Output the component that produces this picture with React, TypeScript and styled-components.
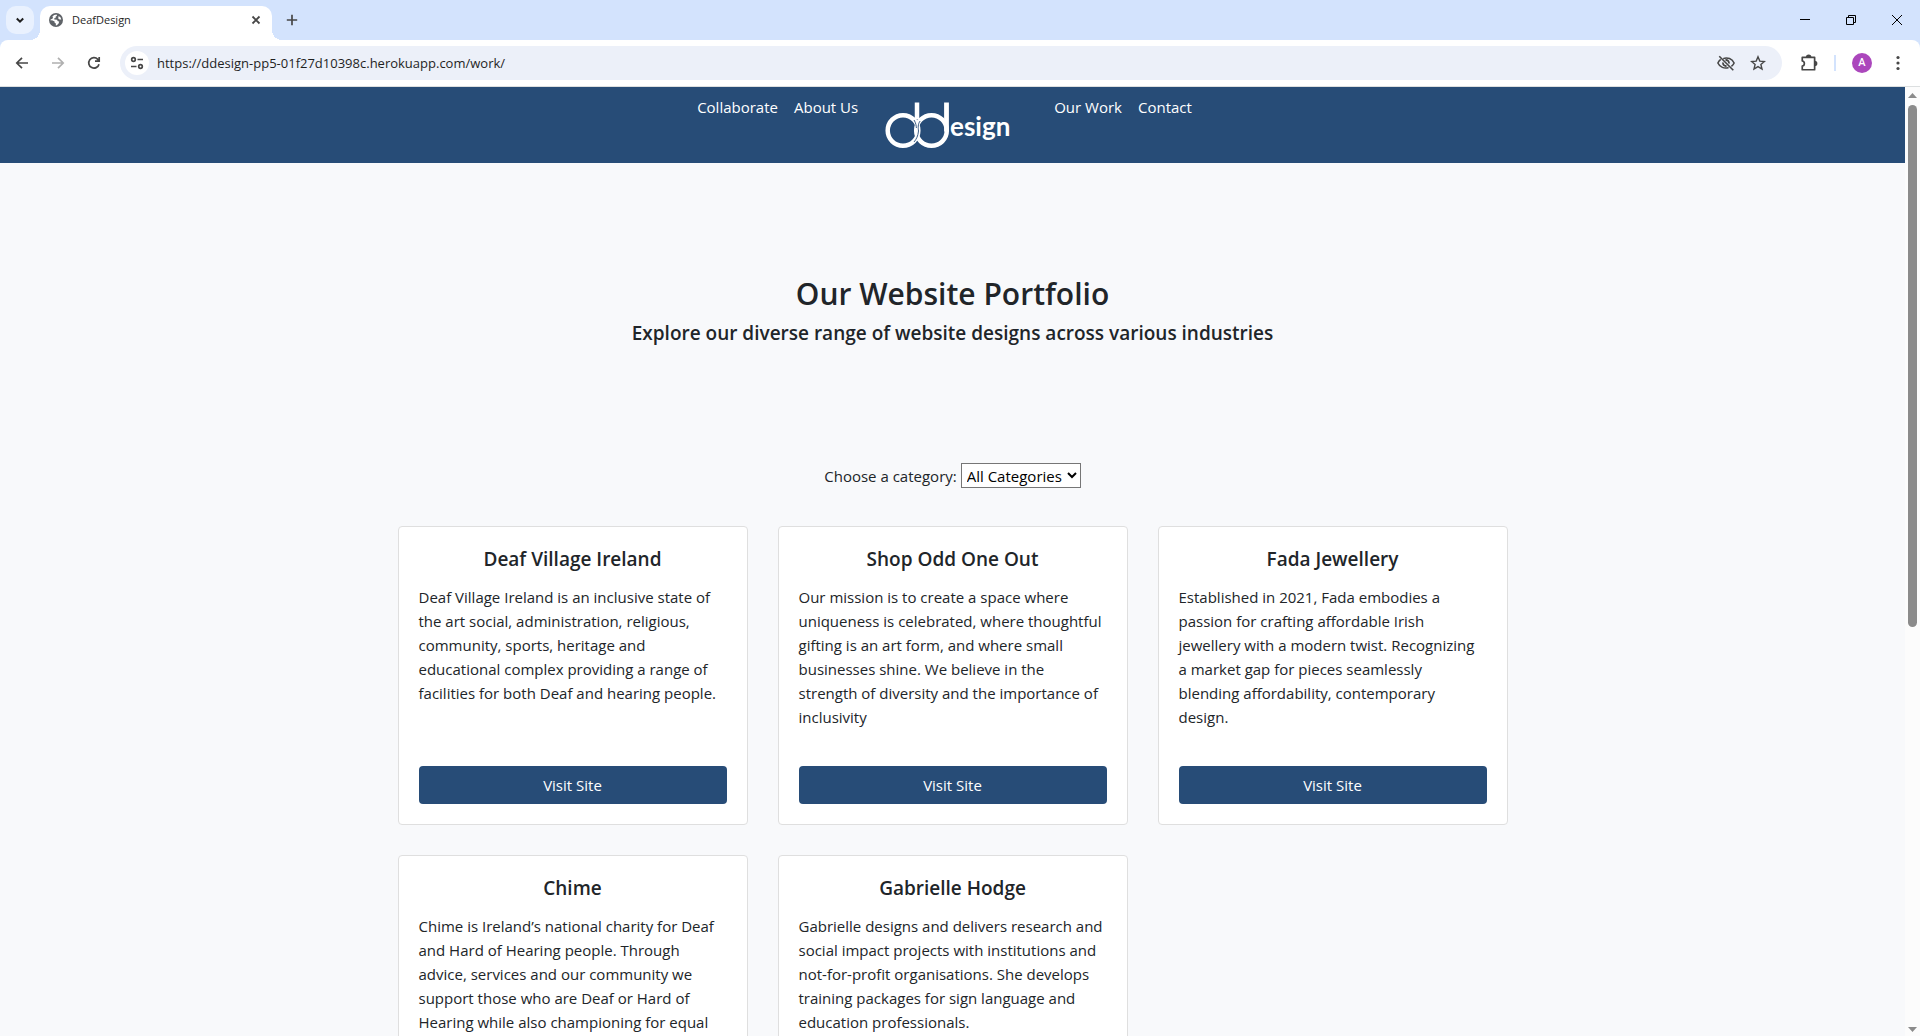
import React from "react";
import styled, { createGlobalStyle } from "styled-components";

const navy = "#274c77";
const ink = "#212529";
const glyph = "#474747";

const GlobalStyle = createGlobalStyle`
  *, *::before, *::after { box-sizing: border-box; }
  body {
    margin: 0;
    color: ${ink};
    background: #f8f9fb;
    font-family: "Segoe UI", "Open Sans", "Noto Sans", sans-serif;
    font-size: 15px;
    line-height: 24px;
  }
  h1, h2, h3, p { margin: 0; }
`;

const Window = styled.div`
  display: flex;
  flex-direction: column;
  height: 100vh;
  overflow: hidden;
`;

/* Browser frame */

const TabStrip = styled.div`
  display: flex;
  align-items: center;
  height: 40px;
  padding-left: 6px;
  background: #d3e3fd;
`;

const ChromeButton = styled.button<{ $size?: number; $faded?: boolean }>`
  display: flex;
  flex: none;
  align-items: center;
  justify-content: center;
  width: ${(p) => p.$size ?? 28}px;
  height: 28px;
  padding: 0;
  border: 0;
  color: ${(p) => (p.$faded ? "#b0b0b0" : glyph)};
  background: transparent;
`;

const TabSearch = styled(ChromeButton)`
  border-radius: 10px;
  color: #1f1f1f;
  background: #e9f1fe;
`;

const Tab = styled.div`
  position: relative;
  display: flex;
  align-items: center;
  align-self: flex-end;
  width: 232px;
  height: 34px;
  margin: 0 6px;
  padding: 0 2px 6px 9px;
  gap: 9px;
  border-radius: 10px 10px 0 0;
  color: #1f1f1f;
  background: #fff;
  font-size: 11px;
  line-height: 16px;

  &::before,
  &::after {
    content: "";
    position: absolute;
    bottom: 0;
    width: 10px;
    height: 10px;
  }
  &::before {
    right: 100%;
    background: radial-gradient(circle at 0 0, transparent 10px, #fff 10px);
  }
  &::after {
    left: 100%;
    background: radial-gradient(circle at 100% 0, transparent 10px, #fff 10px);
  }
`;

const TabTitle = styled.span`
  flex: 1;
`;

const WindowControls = styled.div`
  display: flex;
  margin-left: auto;
`;

const ToolbarBack = styled.div`
  background: #d3e3fd;
`;

const Toolbar = styled.div`
  display: flex;
  align-items: center;
  height: 47px;
  padding: 0 8px 0 4px;
  border-bottom: 1px solid #dcdfe0;
  border-radius: 8px 8px 0 0;
  background: #fff;
`;

const AddressBar = styled.div`
  display: flex;
  flex: 1;
  align-items: center;
  height: 34px;
  margin: 0 10px 0 8px;
  padding: 0 8px 0 5px;
  border-radius: 17px;
  background: #ecf0f9;
`;

const SiteInfo = styled(ChromeButton)`
  height: 24px;
  border-radius: 12px;
  background: #fff;
`;

const AddressInput = styled.input`
  flex: 1;
  height: 24px;
  margin-left: 8px;
  padding: 0;
  border: 0;
  outline: 0;
  color: #1f1f1f;
  background: transparent;
  font: inherit;
  font-size: 13px;
`;

const Divider = styled.span`
  width: 2px;
  height: 16px;
  margin: 0 11px 0 8px;
  background: #d3e3fd;
`;

const Avatar = styled.button`
  width: 20px;
  height: 20px;
  margin: 0 12px 0 5px;
  padding: 0;
  border: 0;
  border-radius: 50%;
  color: #fff;
  background: #ab47bc;
  font: 500 11px/20px Roboto, sans-serif;
`;

/* Page viewport with its scrollbar */

const Viewport = styled.div`
  display: flex;
  flex: 1;
  min-height: 0;
`;

const Page = styled.div`
  flex: 1;
  overflow: hidden;
`;

const ScrollBar = styled.div`
  display: flex;
  flex-direction: column;
  align-items: center;
  width: 15px;
  padding: 6px 0 4px;
  background: #fcfcfc;
`;

const Track = styled.div`
  flex: 1;
  width: 9px;
  margin: 7px 0;
`;

const Thumb = styled.div`
  height: 57%;
  border-radius: 5px;
  background: #8b8b8b;
`;

/* Site */

const Header = styled.header`
  display: flex;
  justify-content: center;
  height: 76px;
  padding: 8px 16px 8px 0;
  background: ${navy};
`;

const NavGroup = styled.nav`
  display: flex;
`;

const NavLink = styled.a`
  height: 24px;
  padding: 0 8px;
  color: #fff;
  text-decoration: none;
`;

const LogoLink = styled.a`
  display: block;
  width: 180px;
  height: 60px;
`;

const Hero = styled.section`
  padding: 112px 16px 118px;
  text-align: center;
`;

const Heading = styled.h1`
  margin-bottom: 8px;
  font-size: 30px;
  font-weight: 600;
  line-height: 38px;
`;

const Subheading = styled.h2`
  font-size: 19px;
  font-weight: 600;
  line-height: 24px;
`;

const Filter = styled.div`
  display: flex;
  align-items: center;
  justify-content: center;
  gap: 4px;
  margin-bottom: 38px;
`;

const CategorySelect = styled.select`
  height: 25px;
  padding: 0 1px;
  border: 1px solid #767676;
  border-radius: 0;
  color: #000;
  background: #fff;
  font: inherit;
`;

const CardGrid = styled.div`
  display: grid;
  grid-template-columns: repeat(auto-fill, minmax(320px, 1fr));
  gap: 30px;
  max-width: 1110px;
  margin: 0 auto;
`;

const Card = styled.article`
  display: flex;
  flex-direction: column;
  min-height: 299px;
  padding: 20px;
  border: 1px solid #dfdfdf;
  border-radius: 4px;
  background: #fff;
`;

const CardTitle = styled.h3`
  margin-bottom: 14px;
  font-size: 19px;
  font-weight: 600;
  line-height: 24px;
  text-align: center;
`;

const CardText = styled.p`
  margin-bottom: 32px;
`;

const VisitLink = styled.a`
  margin-top: auto;
  padding: 7px 12px;
  border-radius: 4px;
  color: #fff;
  background: ${navy};
  text-align: center;
  text-decoration: none;
`;

const sites = [
  {
    name: "Deaf Village Ireland",
    text: "Deaf Village Ireland is an inclusive state of the art social, administration, religious, community, sports, heritage and educational complex providing a range of facilities for both Deaf and hearing people.",
  },
  {
    name: "Shop Odd One Out",
    text: "Our mission is to create a space where uniqueness is celebrated, where thoughtful gifting is an art form, and where small businesses shine. We believe in the strength of diversity and the importance of inclusivity",
  },
  {
    name: "Fada Jewellery",
    text: "Established in 2021, Fada embodies a passion for crafting affordable Irish jewellery with a modern twist. Recognizing a market gap for pieces seamlessly blending affordability, contemporary design.",
  },
  {
    name: "Chime",
    text: "Chime is Ireland’s national charity for Deaf and Hard of Hearing people. Through advice, services and our community we support those who are Deaf or Hard of Hearing while also championing for equal",
  },
  {
    name: "Gabrielle Hodge",
    text: "Gabrielle designs and delivers research and social impact projects with institutions and not-for-profit organisations. She develops training packages for sign language and education professionals.",
  },
];

/* Icons */

const Icon = ({ size = 16, width = 1.7, children }: { size?: number; width?: number; children: React.ReactNode }) => (
  <svg width={size} height={size} viewBox="0 0 16 16" fill="none" stroke="currentColor" strokeWidth={width} aria-hidden="true">
    {children}
  </svg>
);

const GlobeIcon = () => (
  <svg width="14" height="14" viewBox="0 0 14 14" aria-hidden="true">
    <circle cx="7" cy="7" r="7" fill="#5f6368" />
    <path
      d="M5.2 1.9 7.6 1.6 8 2.8 6.6 3.8 6.6 5 5 5.6 5.4 6.6 8 6.8 8.8 8.2 10.2 8.4 9.6 10.4 7.8 12.2 6.8 12.4 6.9 10.6 5.6 9.8 5.6 8.6 3 7.2 1.6 7.4 1.7 6.2 3.2 6 4 4.6 3.4 3.6Z M9.6 3 11.6 4.6 12.3 6.6 10.6 6.4 9.2 5.4Z"
      fill="#fff"
    />
  </svg>
);

const Logo = () => (
  <svg width="180" height="60" viewBox="0 0 180 60" role="img" aria-label="ddesign">
    <g fill="none" stroke="#fff">
      <circle cx="37" cy="35.5" r="15.3" strokeWidth="4.5" />
      <circle cx="65.5" cy="35.5" r="15.3" strokeWidth="4.5" />
      <path d="M51 7.5v17" strokeWidth="4.5" />
      <path d="M80.5 7.500v29" strokeWidth="4.8" />
      <path d="M54.200 26c-2.600 3-2 7-1.700 10-.5 5-2 8-4.500 11M48 25c2 3 2.200 6 2.400 8" stroke={navy} strokeWidth=".9" />
    </g>
    <text x="84" y="41" fill="#fff" fontFamily="Lato, sans-serif" fontSize="26" fontWeight="700">
      esign
    </text>
  </svg>
);

export default function App() {
  return (
    <Window>
      <GlobalStyle />
      <TabStrip>
        <TabSearch aria-label="Search tabs">
          <Icon><path d="m4.800 6.500 3.200 3.200 3.200-3.200" strokeWidth="2" /></Icon>
        </TabSearch>
        <Tab>
          <GlobeIcon />
          <TabTitle>DeafDesign</TabTitle>
          <ChromeButton aria-label="Close tab">
            <Icon width={1.8}><path d="m4.500 4.500 7 7m0-7-7 7" /></Icon>
          </ChromeButton>
        </Tab>
        <ChromeButton aria-label="New tab">
          <Icon><path d="M8 2.800v10.400M2.800 8h10.400" /></Icon>
        </ChromeButton>
        <WindowControls>
          <ChromeButton $size={46} aria-label="Minimize">
            <Icon width={1}><path d="M3 7.500h10" stroke="#000" /></Icon>
          </ChromeButton>
          <ChromeButton $size={46} aria-label="Restore">
            <Icon width={1}><path d="M3.500 5.500h7v7h-7zM5.500 5.500v-2h7v7h-2" stroke="#000" /></Icon>
          </ChromeButton>
          <ChromeButton $size={46} aria-label="Close">
            <Icon width={1}><path d="m3 3 10 10m0-10L3 13" stroke="#000" /></Icon>
          </ChromeButton>
        </WindowControls>
      </TabStrip>

      <ToolbarBack>
        <Toolbar>
          <ChromeButton $size={36} aria-label="Back">
            <Icon><path d="M14 8H3M8 2.800 2.800 8 8 13.200" /></Icon>
          </ChromeButton>
          <ChromeButton $size={36} $faded aria-label="Forward">
            <Icon><path d="M2 8h11M8 2.800 13.200 8 8 13.200" /></Icon>
          </ChromeButton>
          <ChromeButton $size={36} aria-label="Reload">
            <Icon><path d="M13 9.200A5.200 5.200 0 1 1 11.800 4.400L13 5.600M13.200 2v4.200H9" /></Icon>
          </ChromeButton>
          <AddressBar>
            <SiteInfo $size={24} aria-label="View site information">
              <Icon><circle cx="4.500" cy="4.500" r="1.800" /><path d="M8.500 4.500H14M2 11.500h5.500" /><circle cx="11.500" cy="11.500" r="1.800" /></Icon>
            </SiteInfo>
            <AddressInput aria-label="Address" defaultValue="https://ddesign-pp5-01f27d10398c.herokuapp.com/work/" />
            <ChromeButton $size={32} aria-label="Third-party cookies blocked">
              <Icon size={18} width={1.4}>
                <path d="M5.500 4.100A7.500 7.500 0 0 1 15.200 8a8 8 0 0 1-2.400 3.100M10.300 12A7.500 7.500 0 0 1 .8 8a8 8 0 0 1 2.500-3.200M2 2l12.500 12.500" />
                <path d="M7.500 5.400A2.600 2.600 0 0 1 10.600 8.500M5.400 7.500a2.600 2.600 0 0 0 3.100 3.100" strokeWidth="1.6" />
              </Icon>
            </ChromeButton>
            <ChromeButton $size={32} aria-label="Bookmark this tab">
              <Icon width={1.4}><path d="m8 1.800 1.800 4.300 4.600.4-3.500 3 1.100 4.500L8 11.600 4 14l1.100-4.500-3.500-3 4.600-.4z" /></Icon>
            </ChromeButton>
          </AddressBar>
          <ChromeButton $size={34} aria-label="Extensions">
            <Icon size={18} width={1.5}>
              <path d="M2 3h11v11H2v-3.200c2.500-.3 2.500-4.300 0-4.600z" strokeLinejoin="round" />
              <path d="M6 3a1.700 1.700 0 0 1 3.400 0M13 6.800a1.700 1.700 0 0 1 0 3.400" fill="currentColor" />
            </Icon>
          </ChromeButton>
          <Divider />
          <Avatar aria-label="Profile">A</Avatar>
          <ChromeButton aria-label="Menu">
            <Icon><g fill="currentColor" stroke="none"><circle cx="8" cy="2.500" r="1.600" /><circle cx="8" cy="8" r="1.600" /><circle cx="8" cy="13.500" r="1.600" /></g></Icon>
          </ChromeButton>
        </Toolbar>
      </ToolbarBack>

      <Viewport>
        <Page>
          <Header>
            <NavGroup>
              <NavLink href="#collaborate">Collaborate</NavLink>
              <NavLink href="#about">About Us</NavLink>
            </NavGroup>
            <LogoLink href="#home"><Logo /></LogoLink>
            <NavGroup>
              <NavLink href="#work">Our Work</NavLink>
              <NavLink href="#contact">Contact</NavLink>
            </NavGroup>
          </Header>
          <main>
            <Hero>
              <Heading>Our Website Portfolio</Heading>
              <Subheading>Explore our diverse range of website designs across various industries</Subheading>
            </Hero>
            <Filter>
              <label htmlFor="category">Choose a category:</label>
              <CategorySelect id="category"><option>All Categories</option></CategorySelect>
            </Filter>
            <CardGrid>
              {sites.map((site) => (
                <Card key={site.name}>
                  <CardTitle>{site.name}</CardTitle>
                  <CardText>{site.text}</CardText>
                  <VisitLink href="#visit">Visit Site</VisitLink>
                </Card>
              ))}
            </CardGrid>
          </main>
        </Page>
        <ScrollBar>
          <svg width="9" height="5" aria-hidden="true"><path d="M0 5 4.500 0 9 5z" fill="#8b8b8b" /></svg>
          <Track><Thumb /></Track>
          <svg width="9" height="5" aria-hidden="true"><path d="M0 0h9L4.500 5z" fill="#8b8b8b" /></svg>
        </ScrollBar>
      </Viewport>
    </Window>
  );
}
